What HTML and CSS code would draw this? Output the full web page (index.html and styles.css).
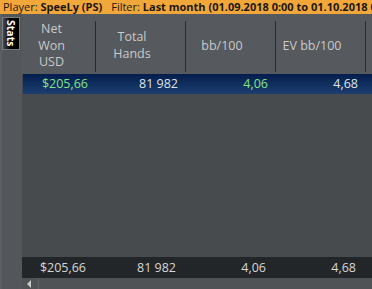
FILE: index.html
```html
<!DOCTYPE html>
<html>
<head>
<meta charset="utf-8">
<link rel="stylesheet" href="styles.css">
</head>
<body>
<div class="titlebar">
  <span>Player: <b>SpeeLy (PS)</b></span>
  <span class="filter">Filter: <b>Last month (01.09.2018 0:00 to 01.10.2018 0:00)</b></span>
</div>
<div class="main">
  <div class="sidebar">
    <div class="tab"><span>Stats</span></div>
  </div>
  <div class="grid">
    <div class="header cols">
      <div class="hcell first">Net<br>Won<br>USD</div>
      <div class="hcell">Total<br>Hands</div>
      <div class="hcell">bb/100</div>
      <div class="hcell">EV bb/100</div>
      <div class="hcell last"></div>
    </div>
    <div class="row cols">
      <div class="cell first green">$205,66</div>
      <div class="cell">81 982</div>
      <div class="cell green">4,06</div>
      <div class="cell">4,68</div>
      <div class="cell"></div>
    </div>
    <div class="fill"></div>
    <div class="total cols">
      <div class="cell first">$205,66</div>
      <div class="cell">81 982</div>
      <div class="cell">4,06</div>
      <div class="cell">4,68</div>
      <div class="cell"></div>
    </div>
    <div class="hscroll">
      <div class="arrow"></div>
      <div class="thumbsep"></div>
    </div>
  </div>
</div>
</body>
</html>
```
FILE: styles.css
```css
html, body {
  margin: 0;
  padding: 0;
  width: 372px;
  height: 289px;
  overflow: hidden;
  background: #474b4e;
  font-family: "Open Sans", "DejaVu Sans", sans-serif;
}

.titlebar {
  height: 14px;
  background: #f2a73a;
  color: #1a1712;
  font-size: 11px;
  line-height: 14px;
  padding-left: 3px;
  white-space: nowrap;
  overflow: hidden;
  display: flex;
  gap: 9px;
}
.titlebar b { font-weight: 700; }

.main {
  display: flex;
  height: 275px;
}

.sidebar {
  width: 20px;
  background: #53575b;
  border-left: 2px solid #5b5f63;
  padding-top: 3px;
  box-sizing: content-box;
}

.tab {
  width: 18px;
  height: 33px;
  border: 1px solid #7a7d80;
  box-sizing: border-box;
  background: linear-gradient(to right, #4a4a4a 0%, #000 45%, #000 100%);
  display: flex;
  align-items: center;
  justify-content: center;
}
.tab span {
  writing-mode: vertical-rl;
  color: #fff;
  font-size: 10.5px;
  font-weight: 700;
  line-height: 1;
}

.grid {
  flex: 1;
  display: flex;
  flex-direction: column;
  min-width: 0;
}

.cols {
  display: grid;
  grid-template-columns: 74px 90px 90px 90px 1fr;
}

.header {
  height: 60px;
  background: #56595d;
  color: #c9cacb;
  font-size: 12.5px;
  line-height: 16.7px;
}
.hcell {
  display: flex;
  align-items: center;
  justify-content: center;
  text-align: center;
  padding-right: 17px;
  padding-bottom: 1px;
  border-right: 1px solid #2a2c2e;
  margin: 7px 0 4px;
}
.hcell.first { padding-right: 14px; }
.hcell.last { border-right: none; }

.row {
  height: 20px;
  margin-left: 1px;
  grid-template-columns: 73px 90px 90px 90px 1fr;
  background: linear-gradient(#041d4c, #1b3f70);
  color: #dfe3e8;
}
.cell {
  font-size: 12.5px;
  line-height: 20px;
  text-align: right;
  padding-right: 8px;
  white-space: nowrap;
}
.green { color: #84e384; }

.fill {
  flex: 1;
  background: #474b4e;
}

.total {
  height: 21px;
  background: #222628;
  color: #d5d7d9;
}
.total .cell {
  line-height: 21px;
  padding-right: 10px;
}

.hscroll {
  height: 11px;
  background: #4f5356;
  display: flex;
  align-items: center;
}
.arrow {
  width: 0;
  height: 0;
  margin-left: 5px;
  border-top: 4px solid transparent;
  border-bottom: 4px solid transparent;
  border-right: 4px solid #c9cbcd;
}
.thumbsep {
  width: 1px;
  height: 11px;
  margin-left: 7px;
  background: #5f6367;
}
```
